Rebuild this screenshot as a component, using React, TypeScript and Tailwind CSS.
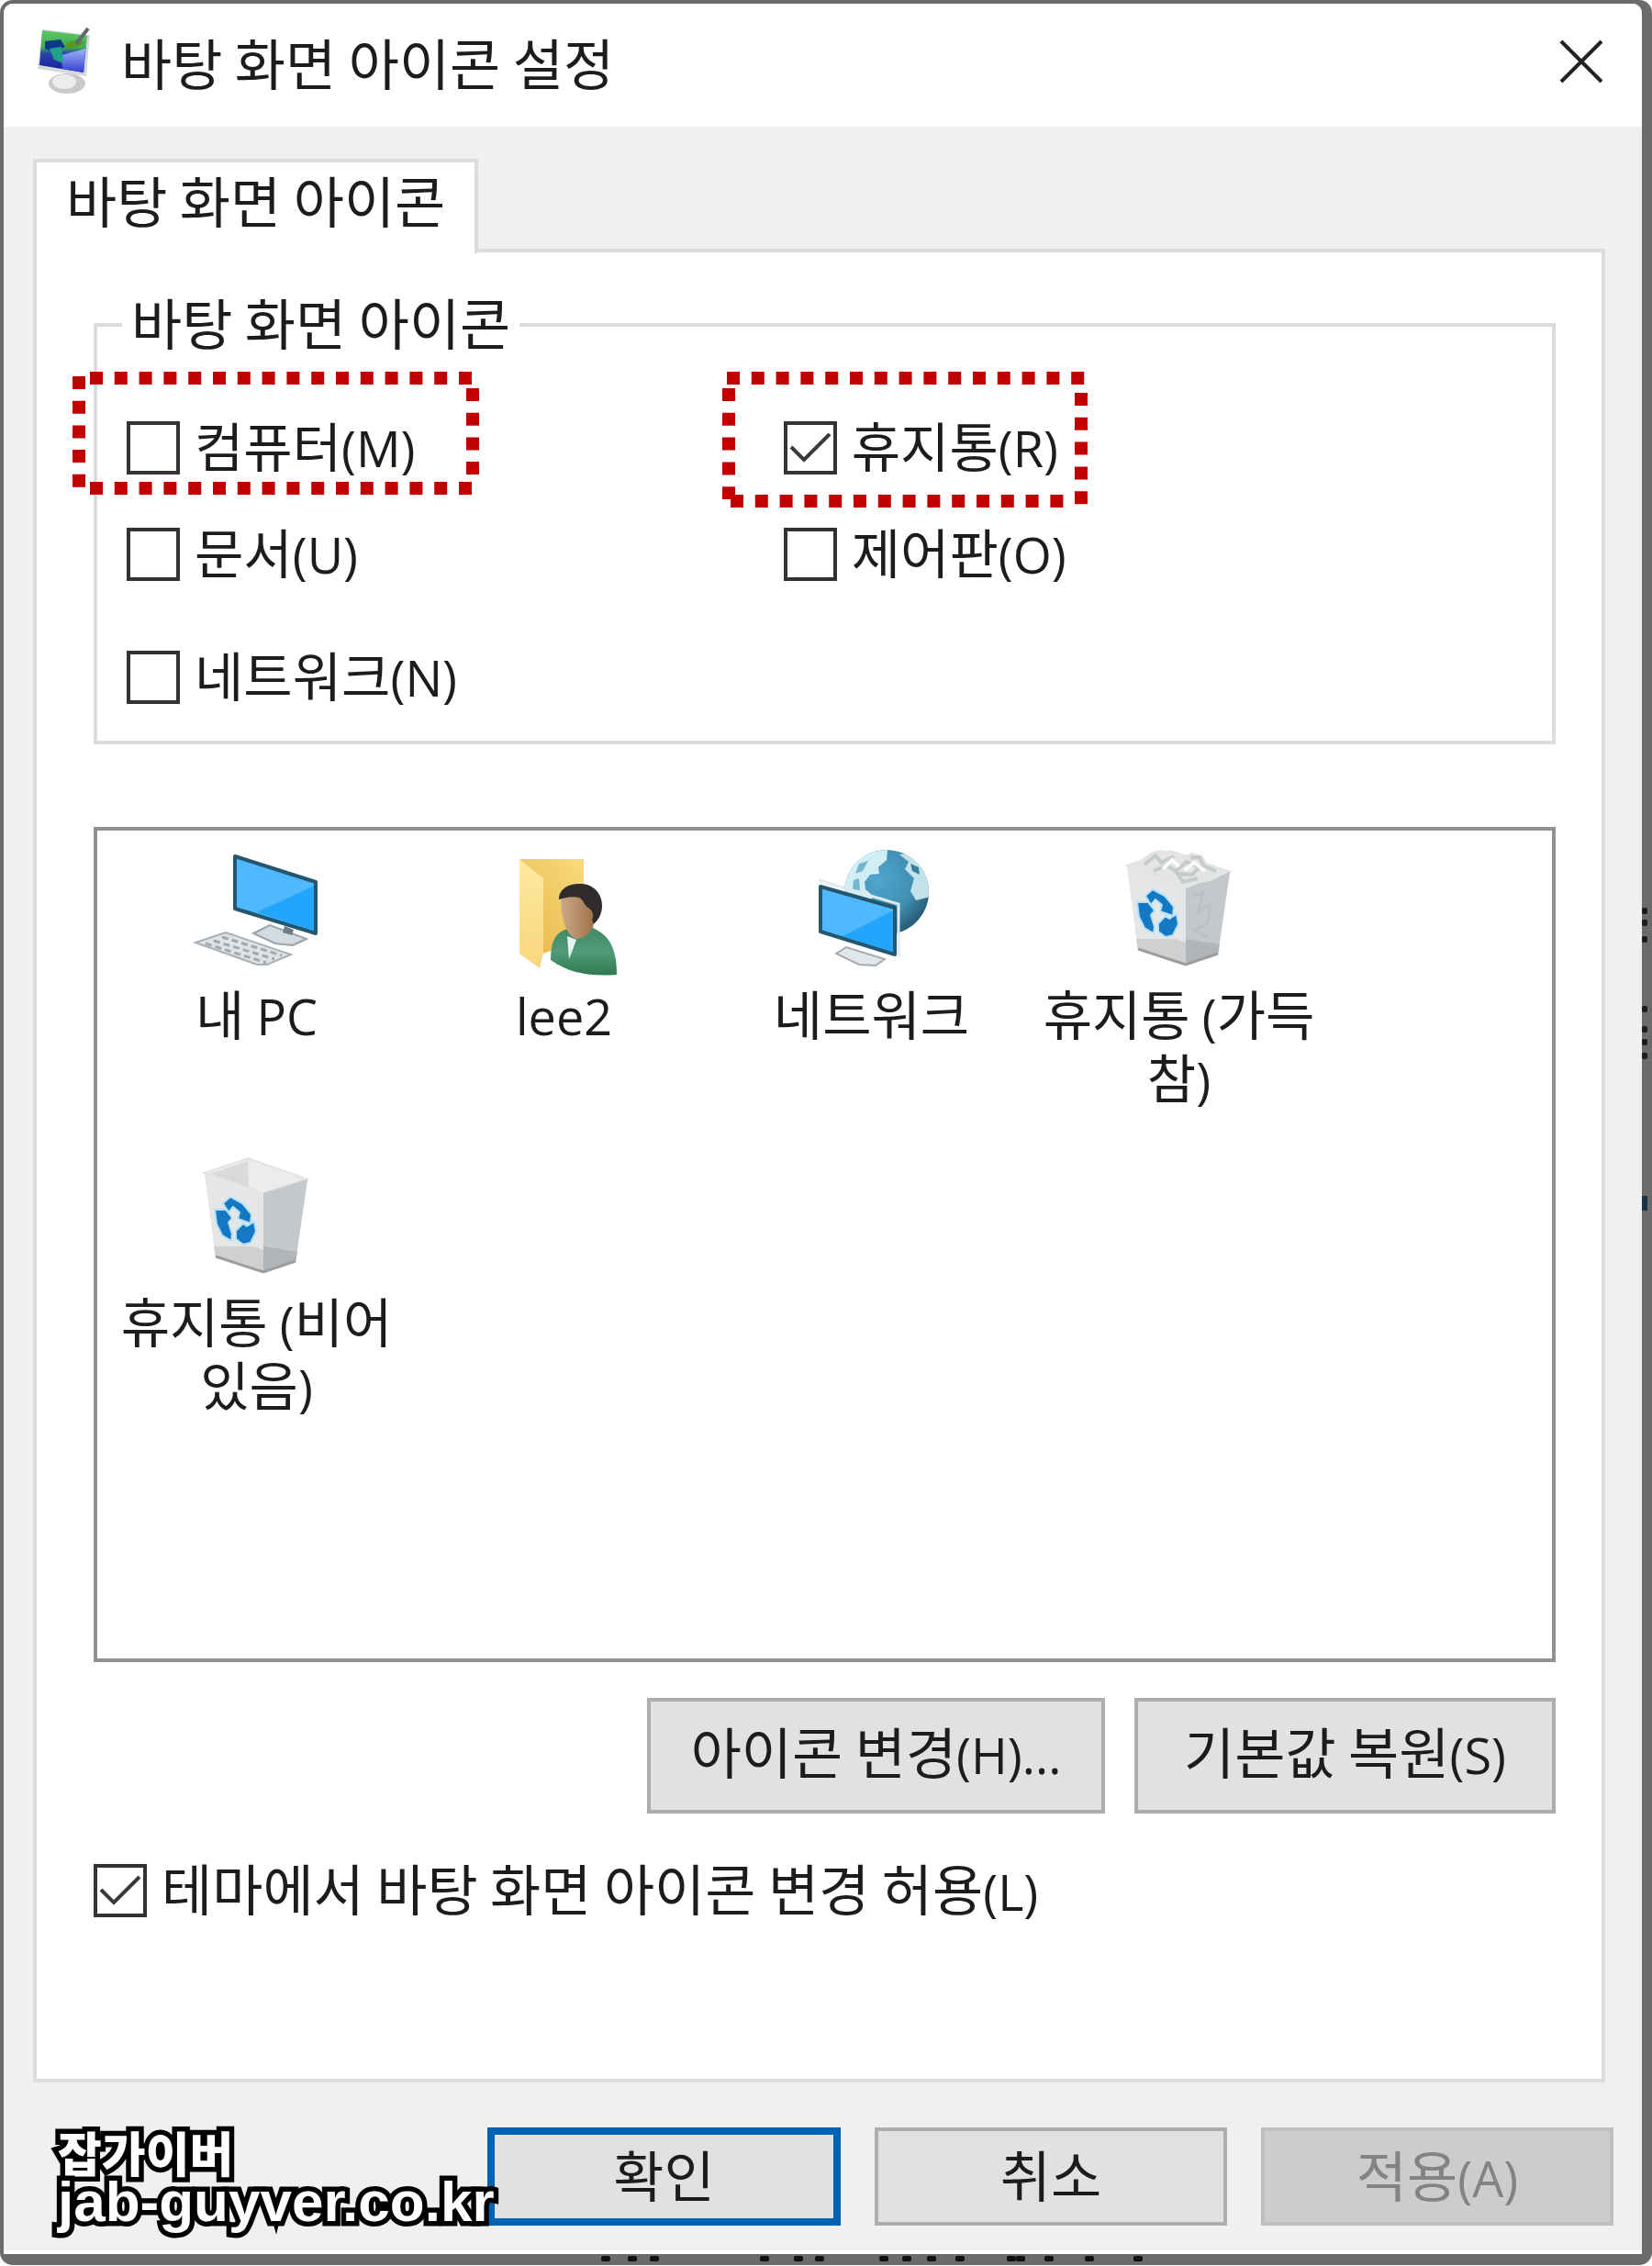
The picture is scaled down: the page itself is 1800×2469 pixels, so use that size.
import type { ReactNode } from 'react'

interface CheckItemProps {
  label: string
  accessKey: string
  checked?: boolean
  className?: string
  children?: ReactNode
}

// Latin parts are set a little smaller than the Hangul around them
function Latin({ children }: { children: ReactNode }) {
  return (
    <span className="font-['Open_Sans','Noto_Sans',sans-serif] text-[54px] leading-none">{children}</span>
  )
}

function CheckItem({ label, accessKey, checked = false, className = 'text-[58px]', children }: CheckItemProps) {
  return (
    <label className={`relative flex h-[72px] w-fit items-center gap-4 ${className}`}>
      <span className="relative size-[58px] shrink-0">
        <input
          type="checkbox"
          defaultChecked={checked}
          className="peer block size-full appearance-none border-4 border-[#333] bg-white"
        />
        <svg
          viewBox="0 0 58 58"
          className="pointer-events-none absolute inset-0 hidden size-full peer-checked:block"
        >
          <path d="M8 28 L22 42 L50 14" fill="none" stroke="#3a3a3a" strokeWidth="4" />
        </svg>
      </span>
      <span className="pb-2 whitespace-nowrap">
        {label}
        <Latin>({accessKey})</Latin>
      </span>
      {children}
    </label>
  )
}

function ComputerHighlight() {
  return (
    <svg
      viewBox="0 0 443 134"
      className="pointer-events-none absolute -top-[47px] -left-[59px] h-[134px] w-[443px]"
      stroke="#c00000"
      strokeWidth="14"
      aria-hidden="true"
    >
      <path d="M19 7 H436 M19 127 H436" strokeDasharray="14 12.8" />
      <path d="M7 5 V127" strokeDasharray="14 12.7" />
      <path d="M436 18 V113" strokeDasharray="14 12.7" />
    </svg>
  )
}

function TrashHighlight() {
  return (
    <svg
      viewBox="0 0 398 148"
      className="pointer-events-none absolute -top-[47px] -left-[67px] h-[148px] w-[398px]"
      stroke="#c00000"
      strokeWidth="14"
      aria-hidden="true"
    >
      <path d="M5 7 H398" strokeDasharray="14 12.8" />
      <path d="M9 141 H372" strokeDasharray="14 12.8" />
      <path d="M7 18 V139" strokeDasharray="14 12.8" />
      <path d="M391 23 V148" strokeDasharray="14 12.8" />
    </svg>
  )
}

function TitleIcon() {
  return (
    <svg viewBox="0 -5 66 86" className="h-[86px] w-[66px] shrink-0 overflow-visible" aria-hidden="true">
      <defs>
        <linearGradient id="deskTop" x1="0" y1="0" x2="0" y2="1">
          <stop offset="0" stopColor="#5cc661" />
          <stop offset="0.4" stopColor="#3fae58" />
          <stop offset="0.55" stopColor="#2a45a8" />
          <stop offset="1" stopColor="#161b9c" />
        </linearGradient>
        <linearGradient id="deskGlow" x1="0" y1="0" x2="0" y2="1">
          <stop offset="0" stopColor="#a3b2f7" />
          <stop offset="1" stopColor="#3140cf" />
        </linearGradient>
      </defs>
      <ellipse cx="35" cy="62" rx="20" ry="11" fill="#c9c9c9" />
      <ellipse cx="32" cy="60" rx="13" ry="8" fill="#ececec" />
      <path d="M8 3 L60 9 L56 54 L3 46 Z" fill="#d5d8dc" />
      <path d="M8 4 L57 10 L53 50 L5 42 Z" fill="url(#deskTop)" />
      <path d="M29 31 L55 24 L53 50 L30 46 Z" fill="url(#deskGlow)" />
      <path d="M11 16 L28 14 L33 22 L21 28 L11 24 Z" fill="#0c3a86" />
      <path d="M16 24 L29 22 L31 40 L21 36 Z" fill="#1fa28a" />
      <path d="M32 24 L48 22 L55 17 L46 14 L34 18 Z" fill="#579a24" />
      <path d="M45 19 L58 2" stroke="#5d6a6a" strokeWidth="4" />
    </svg>
  )
}

function Screen({ points, shine }: { points: string; shine: string }) {
  return (
    <>
      <polygon points={points} fill="#4fb8ff" stroke="#24566f" strokeWidth="4" strokeLinejoin="round" />
      <polygon points={shine} fill="#22a6fd" />
    </>
  )
}

function PcIcon() {
  return (
    <svg viewBox="0 0 128 128" className="size-32 overflow-visible" aria-hidden="true">
      <path d="M60 92 L78 83 L118 98 L103 105 L84 103 Z" fill="#d3dae0" stroke="#98a3ab" strokeWidth="2" />
      <path d="M94 84 L104 88 L102 94 L92 91 Z" fill="#6f7d86" />
      <Screen points="40,8 128,36 128,92 40,65" shine="126,40 126,89 64,69" />
      <path d="M-3 102 L30 91 L101 115 L75 126 L64 126 Z" fill="#dfe3e6" stroke="#a9b0b6" strokeWidth="2" />
      <path
        d="M8 103 L74 124 M17 100 L83 120 M26 96 L91 116"
        fill="none"
        stroke="#a2a9af"
        strokeWidth="3"
        strokeDasharray="7 4"
      />
    </svg>
  )
}

function UserFolderIcon() {
  return (
    <svg viewBox="2 0 128 128" className="size-32 overflow-visible" aria-hidden="true">
      <defs>
        <linearGradient id="folderBack" x1="1" y1="0" x2="0" y2="1">
          <stop offset="0" stopColor="#fadb7c" />
          <stop offset="1" stopColor="#e5b548" />
        </linearGradient>
        <linearGradient id="folderFlap" x1="0" y1="0" x2="0" y2="1">
          <stop offset="0" stopColor="#ffe9a0" />
          <stop offset="1" stopColor="#f8d67c" />
        </linearGradient>
        <linearGradient id="skin" x1="0" y1="0" x2="1" y2="0">
          <stop offset="0" stopColor="#cda98a" />
          <stop offset="1" stopColor="#9b6c42" />
        </linearGradient>
        <linearGradient id="shirt" x1="0" y1="0" x2="0" y2="1">
          <stop offset="0" stopColor="#3f8a63" />
          <stop offset="0.5" stopColor="#519c78" />
          <stop offset="1" stopColor="#2f7a50" />
        </linearGradient>
      </defs>
      <path d="M17 11 H87 V100 L42 114 Z" fill="url(#folderBack)" />
      <path d="M17 11 L43 32 V112 L39 130 L17 114 Z" fill="url(#folderFlap)" />
      <path d="M51 121 C51 98 58 90 70 87 L97 86 C112 93 123 104 123 137 C96 139 72 136 51 121 Z" fill="url(#shirt)" />
      <path d="M69 95 L79 99 L71 120 Z" fill="#e9f4f2" />
      <path d="M62 55 C63 42 95 42 102 60 L97 86 C92 94 85 98 79 98 C70 95 63 82 62 55 Z" fill="url(#skin)" />
      <path
        d="M60 55 C60 42 73 37 85 38 C99 39 108 50 107 64 C106 72 103 77 98 82 L96 77 C99 72 96 66 92 64 C87 61 87 55 82 53 C74 51 67 53 60 55 Z"
        fill="#2f2c2b"
      />
    </svg>
  )
}

function NetworkIcon() {
  return (
    <svg viewBox="-2 0 128 128" className="size-32 overflow-visible" aria-hidden="true">
      <defs>
        <radialGradient id="ocean" cx="0.4" cy="0.35" r="0.7">
          <stop offset="0" stopColor="#4fa6d0" />
          <stop offset="0.6" stopColor="#418fb2" />
          <stop offset="1" stopColor="#24566d" />
        </radialGradient>
        <clipPath id="globe">
          <circle cx="78" cy="47" r="46" />
        </clipPath>
      </defs>
      <circle cx="78" cy="47" r="46" fill="url(#ocean)" />
      <g clipPath="url(#globe)">
        <path
          d="M32 50 C30 20 50 2 79 1 L78 12 L69 20 L70 27 L60 28 L54 36 L55 44 L64 52 L60 56 L44 52 L42 62 L30 60 Z"
          fill="#d2eef5"
        />
        <path d="M48 16 L58 13 L52 24 L44 27 Z M42 34 L48 32 L49 45 L41 44 Z" fill="#74b7d0" />
        <path d="M92 6 L102 14 L98 22 L108 32 L104 46 L110 56 L126 52 L128 30 L110 4 Z" fill="#c3e3ea" />
        <path d="M104 16 L113 20 L114 28 L106 24 Z" fill="#397f9c" />
      </g>
      <path d="M23 114 L34 107 L76 120 L66 127 L48 126 Z" fill="#e2e6e8" stroke="#a3abb0" strokeWidth="2" />
      <path d="M4 34 L91 60 V118" fill="none" stroke="#dcebf2" strokeWidth="3" />
      <Screen points="6,41 87,64 87,115 6,90" shine="85,67 85,112 30,95" />
    </svg>
  )
}

function TrashIcon({ full = false }: { full?: boolean }) {
  return (
    <svg viewBox="0 0 128 128" className="size-32 overflow-visible" aria-hidden="true">
      <path d="M7 18 L54 2 L119 25 L106 115 L71 127 L19 110 Z" fill="#d9dbdc" />
      <path d="M7 18 L54 2 L119 25 L71 40 Z" fill="#ececec" stroke="#e2e2e2" strokeWidth="2" />
      <path d="M13 19 L54 5 L55 34 Z" fill="#dcdad9" />
      <path d="M7 18 L71 40 V127 L19 110 Z" fill="#e5e6e7" />
      <path d="M71 40 L119 25 L106 115 L71 127 Z" fill="#c3c8cc" />
      <path d="M17 98 L60 98 L71 102 V127 L19 110 Z" fill="#cfd0d2" />
      <path d="M71 98 L108 104 L106 115 L71 127 Z" fill="#b2b5b8" />
      <path d="M19 109 L71 126 L106 114" fill="none" stroke="#9d9d9d" strokeWidth="3" />
      {full && (
        <g>
          <path
            d="M8 19 L22 12 L34 3 L46 1 L60 5 L64 9 L78 4 L90 8 L94 15 L118 25 L100 34 L84 38 L72 43 L52 35 L40 27 L22 24 Z"
            fill="#e3e5e5"
          />
          <path
            d="M26 17 L38 7 L44 15 L58 8 M36 24 L50 18 L60 24 L72 14 L86 20 L78 28 L62 27 L68 36 L84 32 M76 10 L86 9 L90 18 L104 24"
            fill="none"
            stroke="#c6cacb"
            strokeWidth="4"
          />
          <path d="M46 22 L56 12 L64 19 M70 23 L80 15 L92 24" fill="none" stroke="#fafafa" strokeWidth="4" />
          <path d="M78 52 L90 47 L84 68 L98 60 L94 82 L80 88 L94 96" fill="none" stroke="#bbc0c4" strokeWidth="3" />
        </g>
      )}
      <g fill="#1478c2" stroke="#b5e1f8" strokeWidth="2" strokeLinejoin="round">
        <path d="M27 51 L35 44 L48 51 L58 63 L57 73 L43 68 L45 61 L38 55 L33 61 Z" />
        <path d="M18 58 L30 58 L37 67 L33 72 L37 85 L36 92 L26 86 L20 74 Z" />
        <path d="M41 81 L49 73 L53 76 L61 71 L63 82 L57 94 L49 96 L41 90 Z" />
      </g>
    </svg>
  )
}

const desktopIcons: { id: string; icon: ReactNode; label: ReactNode }[] = [
  { id: 'pc', icon: <PcIcon />, label: <>내 <Latin>PC</Latin></> },
  { id: 'user', icon: <UserFolderIcon />, label: <Latin>lee2</Latin> },
  { id: 'network', icon: <NetworkIcon />, label: '네트워크' },
  { id: 'trash-full', icon: <TrashIcon full />, label: <>휴지통 <Latin>(</Latin>가득<br />참<Latin>)</Latin></> },
  { id: 'trash-empty', icon: <TrashIcon />, label: <>휴지통 <Latin>(</Latin>비어<br />있음<Latin>)</Latin></> },
]

// Bits of the window behind that show through the frame
const bottomSpecks = [660, 689, 713, 833, 870, 893, 963, 988, 1015, 1046, 1102, 1112, 1143, 1187, 1240]
const sideSpecks = [992, 1005, 1023, 1099, 1121, 1135, 1150]

export default function App() {
  return (
    <div className="bg-white font-['Noto_Sans_CJK_KR',sans-serif] text-[60px] leading-[72px] text-[#1c1c1c]">
      <div className="relative rounded-[14px] bg-[#6b6b6b] pt-1 pr-[11px] pb-3 pl-1">
        <svg className="pointer-events-none absolute inset-0 size-full" aria-hidden="true">
          {bottomSpecks.map((x) => (
            <rect key={x} x={x - 5} y="2458" width="10" height="6" rx="2" fill="#111" />
          ))}
          {sideSpecks.map((y) => (
            <rect key={y} x="1789" y={y - 3} width="6" height="7" rx="2" fill="#1d1d1d" />
          ))}
          <rect x="1789" y="1303" width="6" height="16" fill="#1b3444" />
        </svg>

        <div className="relative rounded-t-[10px] border-b-4 border-white bg-[#f0f0f0]">
          <header className="flex items-center gap-7 rounded-t-[10px] bg-white pt-5 pr-[42px] pb-7 pl-[34px]">
            <TitleIcon />
            <h1 className="flex-1">바탕 화면 아이콘 설정</h1>
            <button type="button" aria-label="닫기" className="size-12">
              <svg viewBox="0 0 48 48" className="size-full">
                <path d="M2 2 L46 46 M46 2 L2 46" stroke="#222" strokeWidth="4" />
              </svg>
            </button>
          </header>

          <main className="pt-[35px] pr-10 pl-8">
            <div role="tablist">
              <button
                type="button"
                role="tab"
                aria-selected="true"
                className="relative -mb-[5px] block border-4 border-b-0 border-[#dcdcdc] bg-white px-8 pt-1 pb-[23px]"
              >
                바탕 화면 아이콘
              </button>
            </div>

            <section className="border-4 border-[#dcdcdc] bg-white pt-[43px] pr-[50px] pb-[169px] pl-[62px]">
              <fieldset className="border-4 border-[#dcdcdc] px-8 pb-[33px]">
                <legend className="-ml-[5px] px-2.5 pb-2 leading-[64px]">바탕 화면 아이콘</legend>
                <div className="grid grid-cols-[8fr_9fr] gap-y-11 pt-[62px]">
                  <CheckItem label="컴퓨터" accessKey="M">
                    <ComputerHighlight />
                  </CheckItem>
                  <CheckItem label="휴지통" accessKey="R" checked>
                    <TrashHighlight />
                  </CheckItem>
                  <CheckItem label="문서" accessKey="U" />
                  <CheckItem label="제어판" accessKey="O" />
                  <CheckItem label="네트워크" accessKey="N" className="mt-[18px] text-[58px]" />
                </div>
              </fieldset>

              <ul className="mt-[90px] flex min-h-[910px] flex-wrap content-start border-4 border-[#8f9295] pl-1.5 text-[58px]">
                {desktopIcons.map((item) => (
                  <li key={item.id} className="flex w-[335px] flex-col items-center pt-5 pb-[33px]">
                    {item.icon}
                    <span className="mt-4 text-center leading-[69px] whitespace-nowrap">{item.label}</span>
                  </li>
                ))}
              </ul>

              <div className="mt-[39px] flex justify-end gap-8">
                <button type="button" className="h-[126px] w-[499px] border-4 border-[#adadad] bg-[#e1e1e1] pb-3">
                  아이콘 변경<Latin>(H)...</Latin>
                </button>
                <button type="button" className="h-[126px] w-[459px] border-4 border-[#adadad] bg-[#e1e1e1] pb-3">
                  기본값 복원<Latin>(S)</Latin>
                </button>
              </div>

              <CheckItem
                label="테마에서 바탕 화면 아이콘 변경 허용"
                accessKey="L"
                checked
                className="mt-12 text-[60px]"
              />
            </section>
          </main>

          <footer className="relative flex justify-end gap-[37px] pt-[49px] pr-[31px] pb-[27px]">
            <button type="button" className="h-[107px] w-[385px] border-8 border-[#0063b1] bg-[#e1e1e1] pb-2">
              확인
            </button>
            <button type="button" className="h-[107px] w-[384px] border-4 border-[#adadad] bg-[#e1e1e1] pb-2">
              취소
            </button>
            <button type="button" disabled className="h-[107px] w-[384px] border-4 border-[#bfbfbf] bg-[#ccc] pb-2 text-[#838383]">
              적용<Latin>(A)</Latin>
            </button>
            <div className="absolute bottom-[26px] left-[59px] font-black text-white [-webkit-text-stroke:11px_#000] [paint-order:stroke_fill]">
              <p className="text-[52px] leading-[54px]">잡가이버</p>
              <p className="font-['Liberation_Sans',sans-serif] text-[62px] leading-[54px]">jab-guyver.co.kr</p>
            </div>
          </footer>
        </div>
      </div>
    </div>
  )
}
